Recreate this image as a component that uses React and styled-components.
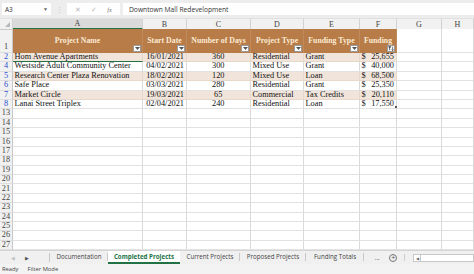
import React from 'react';
import styled, { createGlobalStyle } from 'styled-components';

const Global = createGlobalStyle`
  html, body { margin: 0; padding: 0; background: #ffffff; }
  * { box-sizing: border-box; }
`;

const COLS = '13px 130px 44px 64px 53px 56px 37px 45px 1fr';
const SERIF = '"Liberation Serif", "Times New Roman", serif';
const SANS = '"Open Sans", "Liberation Sans", Arial, sans-serif';
const GREEN = '#217346';

const Frame = styled.div`
  width: 474px;
  height: 274px;
  display: flex;
  flex-direction: column;
  overflow: hidden;
  background: #fff;
`;

/* ---------- formula bar ---------- */
const FormulaBar = styled.div`
  height: 19px;
  flex: none;
  display: flex;
  align-items: flex-start;
  padding: 3px 0 0 2px;
  background: #ededed;
  border-bottom: 1px solid #e0e0e0;
`;

const NameBox = styled.div`
  width: 49px;
  height: 12px;
  background: #fff;
  display: flex;
  align-items: center;
  justify-content: space-between;
  padding: 0 3px 0 3px;
  font: 6.5px ${SANS};
  color: #333;
`;

const Caret = styled.span`
  font-size: 5px;
  color: #666;
`;

const Dots = styled.div`
  width: 16px;
  height: 12px;
  display: flex;
  align-items: center;
  justify-content: center;
  color: #c4c4c4;
  font: 7px ${SANS};
`;

const IconBox = styled.div`
  width: 53px;
  height: 12px;
  background: #fff;
  display: flex;
  align-items: center;
  justify-content: space-around;
  padding: 0 3px;
  color: #b8b8b8;
  font: 7px ${SANS};
`;

const Fx = styled.span`
  font: italic 6.5px ${SERIF};
  color: #777;
`;

const FormulaInput = styled.div`
  flex: 1;
  height: 12px;
  margin-left: 3px;
  background: #fff;
  display: flex;
  align-items: center;
  padding-left: 6px;
  font: 6.7px ${SANS};
  color: #333;
`;

/* ---------- sheet ---------- */
const Sheet = styled.div`
  flex: 1;
  overflow: hidden;
  display: flex;
  flex-direction: column;
`;

const Row = styled.div`
  display: grid;
  grid-template-columns: ${COLS};
  height: ${p => p.$h}px;
  flex: none;
`;

const ColHead = styled.div`
  background: ${p => (p.$sel ? '#dadada' : '#f1f1f1')};
  border-right: 1px solid #d2d2d2;
  border-bottom: ${p => (p.$sel ? `2px solid ${GREEN}` : '1px solid #c8c8c8')};
  display: flex;
  align-items: center;
  justify-content: center;
  font: 8px ${SERIF};
  color: #444;
`;

const Corner = styled(ColHead)`
  position: relative;
  &::after {
    content: '';
    position: absolute;
    right: 2px;
    bottom: 2px;
    border-left: 5px solid transparent;
    border-bottom: 5px solid #b8b8b8;
  }
`;

const RowNum = styled.div`
  background: #f1f1f1;
  border-right: 1px solid #c8c8c8;
  border-bottom: 1px solid #dedede;
  display: flex;
  align-items: ${p => (p.$bottom ? 'flex-end' : 'center')};
  justify-content: center;
  font: 8.3px/1 ${SERIF};
  color: ${p => (p.$filtered ? '#2e4fd1' : '#444')};
  padding-bottom: ${p => (p.$bottom ? '1px' : '0')};
`;

const HeadCell = styled.div`
  position: relative;
  background: #b77c47;
  border-right: 1px solid #c08a5a;
  display: flex;
  align-items: center;
  justify-content: center;
  padding-bottom: 2px;
  font: bold 7.8px ${SERIF};
  color: #fbead3;
  white-space: nowrap;
  overflow: hidden;
`;

const FilterBtn = styled.div`
  position: absolute;
  right: 1px;
  bottom: 1px;
  width: 8px;
  height: 7px;
  background: #fff;
  border: 1px solid #9a9a9a;
  display: flex;
  align-items: center;
  justify-content: center;
`;

const Cell = styled.div`
  position: relative;
  background: ${p => p.$bg || '#fff'};
  border-right: 1px solid ${p => (p.$bg ? '#e6d8cb' : '#dadada')};
  border-bottom: ${p => (p.$sel ? `1.5px solid ${GREEN}` : `1px solid ${p.$bg ? '#e6d8cb' : '#e2e2e2'}`)};
  display: flex;
  align-items: center;
  justify-content: ${p => p.$align || 'flex-start'};
  padding: 0 2px 0 1.5px;
  font: 8.3px/1 ${SERIF};
  color: #111;
  white-space: nowrap;
  overflow: visible;
`;

const Money = styled.div`
  flex: 1;
  display: flex;
  justify-content: space-between;
`;

const Handle = styled.div`
  position: absolute;
  right: -1px;
  bottom: 0px;
  width: 2px;
  height: 2px;
  background: #555;
`;

/* ---------- tabs ---------- */
const TabBar = styled.div`
  height: 14px;
  flex: none;
  display: flex;
  align-items: stretch;
  background: #f0f0f0;
  border-top: 1px solid #d4d4d4;
  font: 6.2px ${SANS};
  color: #444;
`;

const NavArrows = styled.div`
  width: 50px;
  display: flex;
  align-items: center;
  padding-left: 11px;
  gap: 10px;
  font-size: 5px;
  border-right: 1px solid #c8c8c8;
  margin: 2px 0;
`;

const Arrow = styled.span`
  color: ${p => (p.$dim ? '#c0c0c0' : '#555')};
`;

const Tab = styled.div`
  width: ${p => p.$w}px;
  display: flex;
  align-items: center;
  justify-content: center;
  background: ${p => (p.$active ? '#fff' : 'transparent')};
  color: ${p => (p.$active ? GREEN : '#444')};
  font-weight: ${p => (p.$active ? 700 : 400)};
  border-bottom: ${p => (p.$active ? `2px solid ${GREEN}` : '2px solid transparent')};
  position: relative;
  &::after {
    content: '';
    display: ${p => (p.$sep ? 'block' : 'none')};
    position: absolute;
    right: 0;
    top: 2px;
    bottom: 1px;
    width: 1px;
    background: #c8c8c8;
  }
`;

const More = styled.div`
  width: 41px;
  display: flex;
  align-items: center;
  justify-content: space-around;
  padding: 0 3px 0 6px;
  position: relative;
  color: #555;
  &::after {
    content: '';
    position: absolute;
    right: 0;
    top: 3px;
    bottom: 3px;
    width: 1px;
    background: #d0d0d0;
  }
`;

const PlusCircle = styled.span`
  width: 8px;
  height: 8px;
  border: 1px solid #777;
  border-radius: 50%;
  display: flex;
  align-items: center;
  justify-content: center;
  font-size: 7px;
  line-height: 1;
  color: #555;
`;

const ScrollTrack = styled.div`
  flex: 1;
  margin: 3px 0 2px 8px;
  background: #fff;
  border: 1px solid #c8c8c8;
  display: flex;
  align-items: center;
`;

const ScrollBtn = styled.span`
  width: 7px;
  height: 100%;
  border-right: 1px solid #c8c8c8;
  display: flex;
  align-items: center;
  justify-content: center;
  font-size: 4px;
  color: #666;
`;

const StatusBar = styled.div`
  height: 10px;
  flex: none;
  display: flex;
  align-items: center;
  gap: 9px;
  padding-left: 2px;
  background: #f3f3f3;
  font: 5.8px ${SANS};
  color: #444;
`;

/* ---------- data ---------- */
const headers = ['Project Name', 'Start Date', 'Number of Days', 'Project Type', 'Funding Type', 'Funding'];

const data = [
  [2, 'Hom Avenue Apartments', '16/01/2021', '360', 'Residential', 'Grant', '25,655'],
  [4, 'Westside Adult Community Center', '04/02/2021', '300', 'Mixed Use', 'Grant', '40,000'],
  [5, 'Research Center Plaza Renovation', '18/02/2021', '120', 'Mixed Use', 'Loan', '68,500'],
  [6, 'Safe Place', '03/03/2021', '280', 'Residential', 'Grant', '25,350'],
  [7, 'Market Circle', '19/03/2021', '65', 'Commercial', 'Tax Credits', '20,110'],
  [8, 'Lanai Street Triplex', '02/04/2021', '240', 'Residential', 'Loan', '17,550'],
];

const RH = 9.4;
const BEIGE = '#f1e5db';

const DownTri = () => (
  <svg width="5" height="3" viewBox="0 0 5 3">
    <path d="M0 0 L5 0 L2.5 3 Z" fill="#555" />
  </svg>
);

const FunnelIcon = () => (
  <svg width="6" height="5" viewBox="0 0 6 5">
    <path d="M0 0.3 L3.4 0.3 L2.1 2.2 L2.1 4.6 L1.3 4 L1.3 2.2 Z" fill="#444" />
    <path d="M4.6 0.6 L4.6 4.6 M3.6 3.4 L4.6 4.6 L5.6 3.4" stroke="#444" strokeWidth="0.7" fill="none" />
  </svg>
);

export default function App() {
  const empty = Array.from({ length: 15 }, (_, i) => 13 + i);
  return (
    <Frame>
      <Global />
      <FormulaBar>
        <NameBox>
          A3<Caret>▼</Caret>
        </NameBox>
        <Dots>⋮</Dots>
        <IconBox>
          <span>✕</span>
          <span>✓</span>
          <Fx>fx</Fx>
        </IconBox>
        <FormulaInput>Downtown Mall Redevelopment</FormulaInput>
      </FormulaBar>

      <Sheet>
        <Row $h={10}>
          <Corner />
          {['A', 'B', 'C', 'D', 'E', 'F', 'G', 'H'].map(l => (
            <ColHead key={l} $sel={l === 'A'}>{l}</ColHead>
          ))}
        </Row>

        <Row $h={24}>
          <RowNum $bottom>1</RowNum>
          {headers.map(h => (
            <HeadCell key={h}>
              {h}
              <FilterBtn>{h === 'Funding' ? <FunnelIcon /> : <DownTri />}</FilterBtn>
            </HeadCell>
          ))}
          <Cell />
          <Cell />
        </Row>

        {data.map((r, i) => {
          const bg = i % 2 === 0 ? BEIGE : undefined;
          return (
            <Row key={r[0]} $h={RH}>
              <RowNum $filtered>{r[0]}</RowNum>
              <Cell $bg={bg} $sel={i === 0}>{r[1]}</Cell>
              <Cell $bg={bg} $align="flex-end">{r[2]}</Cell>
              <Cell $bg={bg} $align="center">{r[3]}</Cell>
              <Cell $bg={bg}>{r[4]}</Cell>
              <Cell $bg={bg}>{r[5]}</Cell>
              <Cell $bg={bg}>
                <Money>
                  <span>$</span>
                  <span>{r[6]}</span>
                </Money>
                {i === data.length - 1 && <Handle />}
              </Cell>
              <Cell />
              <Cell />
            </Row>
          );
        })}

        {empty.map(n => (
          <Row key={n} $h={RH}>
            <RowNum>{n}</RowNum>
            {Array.from({ length: 8 }, (_, j) => (
              <Cell key={j} />
            ))}
          </Row>
        ))}
      </Sheet>

      <TabBar>
        <NavArrows>
          <Arrow $dim>◀</Arrow>
          <Arrow>▶</Arrow>
        </NavArrows>
        <Tab $w={58} $sep>Documentation</Tab>
        <Tab $w={72} $active>Completed Projects</Tab>
        <Tab $w={60} $sep>Current Projects</Tab>
        <Tab $w={66} $sep>Proposed Projects</Tab>
        <Tab $w={58} $sep>Funding Totals</Tab>
        <More>
          <span>...</span>
          <PlusCircle>+</PlusCircle>
        </More>
        <ScrollTrack>
          <ScrollBtn>◀</ScrollBtn>
        </ScrollTrack>
      </TabBar>

      <StatusBar>
        <span>Ready</span>
        <span>Filter Mode</span>
      </StatusBar>
    </Frame>
  );
}
